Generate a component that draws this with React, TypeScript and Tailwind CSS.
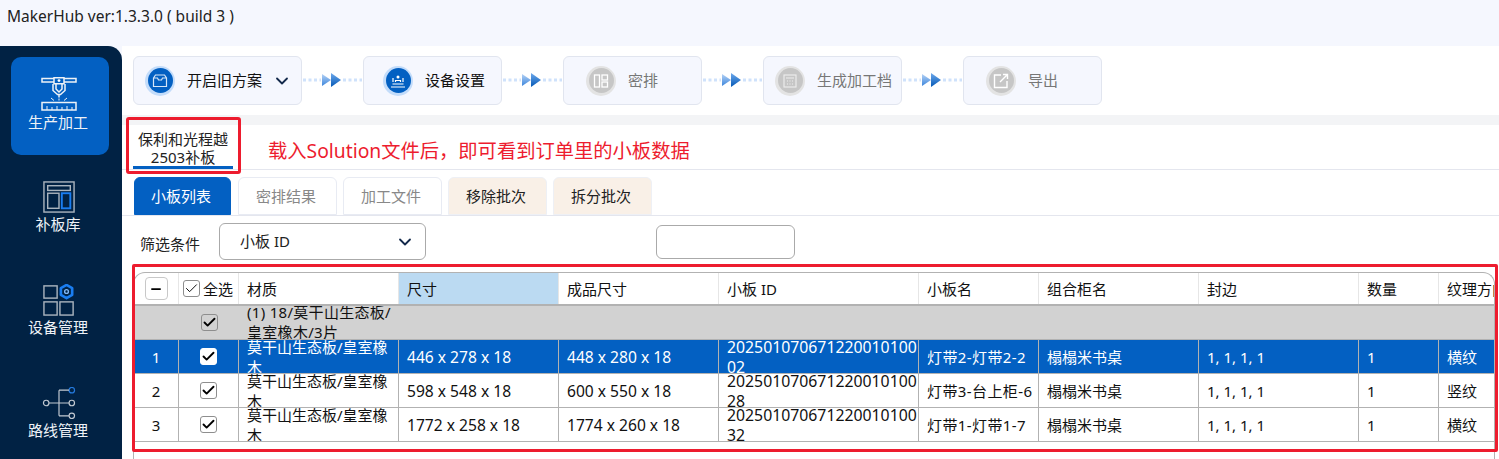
import { Check, ChevronDown, Minus } from 'lucide-react';
import type { ReactNode } from 'react';

const FONT = 'font-["Noto_Sans","Noto_Sans_CJK_SC",sans-serif]';
const COLS = 'grid grid-cols-[45px_60px_160px_160px_160px_200px_120px_160px_160px_80px_55px]';

function MachineIcon() {
    return (
        <svg width="36" height="34" viewBox="0 0 36 34" fill="none" stroke="#eef2f7" strokeWidth="1.500">
            <path d="M1 1.500h12v3.500H1zM23 1.500h12v3.500H23zM13 .8h10v6H13z" />
            <circle cx="18" cy="3.600" r="1.400" fill="#fff" stroke="none" />
            <path d="M12 7v6.500l4.500 4h3l4.500-4V7M15 7v5l3 3 3-3V7M18 17.500v3" />
            <path d="M10 21l3 2.500M26 21l-3 2.500M18 21.500v2" strokeWidth="1" />
            <path d="M1 25.500h34v7.500H1z" />
            <path d="M6 29v4M11 30v3M16 29v4M21 30v3M26 29v4M31 30v3" strokeWidth="1" />
        </svg>
    );
}

function BoardIcon() {
    return (
        <svg width="32" height="32" viewBox="0 0 34 34" fill="none" stroke="#aab4be" strokeWidth="1.500">
            <rect x="1" y="1" width="32" height="32" />
            <rect x="5" y="5" width="24" height="5" />
            <rect x="5" y="13" width="12" height="16" />
            <rect x="20" y="13" width="9" height="16" stroke="#1a7df0" strokeWidth="2" />
        </svg>
    );
}

function DeviceIcon() {
    return (
        <svg width="34" height="32" viewBox="0 0 34 34" fill="none" stroke="#aab4be" strokeWidth="1.500">
            <rect x="1" y="2" width="14" height="13" />
            <rect x="1" y="19" width="14" height="14" />
            <rect x="18" y="19" width="14" height="14" />
            <path d="M25 1l6 3.500v7L25 15l-6-3.500v-7z" stroke="#1a7df0" strokeWidth="2.800" strokeLinejoin="round" />
            <circle cx="25" cy="8" r="2" stroke="#7fb6f5" />
        </svg>
    );
}

function RouteIcon() {
    return (
        <svg width="36" height="32" viewBox="0 0 36 35" fill="none" stroke="#c2c9d1" strokeWidth="1.300">
            <circle cx="4" cy="17.500" r="3" />
            <circle cx="32" cy="17.500" r="3" />
            <circle cx="32" cy="3.500" r="3" stroke="#2479dc" />
            <circle cx="32" cy="31.500" r="3" />
            <path d="M7 17.500h22M18 3.500v28M18 3.500h11M18 31.500h11" />
        </svg>
    );
}

function SideItem({ label, active, children }: { label: string; active?: boolean; children: ReactNode }) {
    return (
        <div className={`flex h-[98px] w-[98px] shrink-0 flex-col items-center justify-end rounded-[10px] pr-[2px] text-[15px] leading-5 text-[#eef2f7] ${active ? 'bg-[#0360c2] pb-[23px]' : 'pb-[24px]'}`}>
            {children}
            <span className="mr-[2px] mt-[1px]">{label}</span>
        </div>
    );
}

function StepGlyph({ kind }: { kind: string }) {
    if (kind === 'box') {
        return (
            <svg width="16" height="16" viewBox="0 0 16 16" fill="none" stroke="#d7e6f7" strokeWidth="1.200">
                <path d="M1.500 5l2-3h9l2 3v8.500h-13zM1.500 5h4l1 2h3l1-2h4" />
            </svg>
        );
    }
    if (kind === 'stage') {
        return (
            <svg width="16" height="16" viewBox="0 0 16 16" fill="none" stroke="#fff" strokeWidth="1.200">
                <path d="M1 14h14M2.500 11h11" />
                <circle cx="8" cy="4" r="1.500" fill="#fff" stroke="none" />
                <path d="M5.500 9V7.500h5V9M3 5v4M13 5v4" />
            </svg>
        );
    }
    if (kind === 'grid') {
        return (
            <svg width="16" height="16" viewBox="0 0 16 16" fill="none" stroke="#fff" strokeWidth="1.300">
                <rect x="1.500" y="2" width="5" height="12" />
                <rect x="9" y="2" width="5.500" height="5" />
                <rect x="9" y="9" width="5.500" height="5" />
            </svg>
        );
    }
    if (kind === 'doc') {
        return (
            <svg width="16" height="16" viewBox="0 0 16 16" fill="none" stroke="#eee" strokeWidth="1.100">
                <rect x="2" y="2" width="12" height="12" />
                <path d="M4 5h8M5 8h1M7.500 8h1M10 8h1M5 11h1M7.500 11h1M10 11h1" />
            </svg>
        );
    }
    return (
        <svg width="18" height="18" viewBox="0 0 18 18" fill="none" stroke="#fff" strokeWidth="1.400">
            <path d="M9 3H2.500v12.500H15V9M8 10l7-7M11 2.500h4.500V7" />
        </svg>
    );
}

function Step({ label, kind, active, padding, chevron }: { label: string; kind: string; active?: boolean; padding: string; chevron?: boolean }) {
    return (
        <div className={`flex h-[49px] items-center rounded-md border border-[#e1e5ef] bg-[#f5f7fe] ${padding} ${chevron ? 'w-[169px]' : 'w-[139px]'}`}>
            <div className={`flex h-[30px] w-[30px] shrink-0 items-center justify-center rounded-full ${active ? 'bg-[#c3dcfa]' : 'bg-[#e3e3e3]'}`}>
                <div className={`flex h-[25px] w-[25px] items-center justify-center rounded-full ${active ? 'bg-[#0360c2]' : 'bg-[#c6c6c6]'}`}>
                    <StepGlyph kind={kind} />
                </div>
            </div>
            <span className={`ml-[12px] whitespace-nowrap text-[15px] ${active ? 'text-[#111]' : 'text-[#777]'}`}>{label}</span>
            {chevron && <ChevronDown className="ml-[10px] h-[20px] w-[20px] text-[#13294b]" strokeWidth={2.2} />}
        </div>
    );
}

function Connector({ id }: { id: string }) {
    return (
        <div className="flex h-[49px] items-center pb-[1px]">
            <svg width="61" height="16" viewBox="0 0 61 16" className="shrink-0">
                <defs>
                    <linearGradient id={`${id}a`} x1="0" y1="0" x2="0" y2="1">
                        <stop offset="0" stopColor="#b5d2f5" />
                        <stop offset="1" stopColor="#3d86dc" />
                    </linearGradient>
                    <linearGradient id={`${id}b`} x1="0" y1="0" x2="0" y2="1">
                        <stop offset="0" stopColor="#6ea9ec" />
                        <stop offset="1" stopColor="#0458b5" />
                    </linearGradient>
                </defs>
                <path d="M1 8H19M41 8H60" stroke="#cfe2fb" strokeWidth="3" strokeDasharray="3 2.500" />
                <path d="M20 2l9 6-9 6z" fill={`url(#${id}a)`} />
                <path d="M29 1l10 7-10 7z" fill={`url(#${id}b)`} />
            </svg>
        </div>
    );
}

function TabButton({ label, tone }: { label: string; tone: 'active' | 'idle' | 'warm' }) {
    const cls = {
        active: 'w-[97px] mr-[1px] bg-[#0360c2] text-white border-[#0360c2]',
        idle: 'w-[99px] bg-white text-[#888] border-[#e8ebf3]',
        warm: 'w-[99px] bg-[#f9f0e7] text-[#222] border-[#eef0f5]',
    }[tone];
    return (
        <div className={`flex h-[38px] items-center justify-center rounded-t-md border pr-[3px] text-[15px] ${cls}`}>{label}</div>
    );
}

function Box({ selected, thin }: { selected?: boolean; thin?: boolean }) {
    return (
        <div className={`flex h-[17px] w-[17px] shrink-0 items-center justify-center rounded-[3px] border ${selected ? 'border-white bg-white' : 'border-[#8e8e8e]'}`}>
            <Check className="h-[15px] w-[15px] text-black" strokeWidth={thin ? 1.5 : 3} />
        </div>
    );
}

const rows = [
    { n: 1, size: '446 x 278 x 18', done: '448 x 280 x 18', id: '20250107067122001010002', name: '灯带2-灯带2-2', grain: '横纹' },
    { n: 2, size: '598 x 548 x 18', done: '600 x 550 x 18', id: '20250107067122001010028', name: '灯带3-台上柜-6', grain: '竖纹' },
    { n: 3, size: '1772 x 258 x 18', done: '1774 x 260 x 18', id: '20250107067122001010032', name: '灯带1-灯带1-7', grain: '横纹' },
];

function Cell({ children, className = '' }: { children?: ReactNode; className?: string }) {
    return <div className={`flex items-center overflow-hidden px-2 ${className}`}>{children}</div>;
}

function ProductTable() {
    const heads = ['尺寸', '成品尺寸', '小板 ID', '小板名', '组合柜名', '封边', '数量', '纹理方向'];
    return (
        <div className="ml-[11px] mr-[4px] mt-[7px] h-[200px] overflow-hidden rounded-t-[12px] border border-b-0 border-[#b2b2b2] text-[15px] leading-5 text-[#111]">
            <div className={`${COLS} h-[33px] border-b-2 border-[#b2b2b2]`}>
                <div className="flex items-center justify-center border-r border-[#e6e6e6]">
                    <div className="flex h-[23px] w-[23px] items-center justify-center rounded border border-[#c8c8c8]">
                        <Minus className="h-[14px] w-[14px] text-black" strokeWidth={3} />
                    </div>
                </div>
                <div className="flex items-center gap-[3px] border-r border-[#e6e6e6] pl-[4px]">
                    <Box thin />
                    <span className="whitespace-nowrap">全选</span>
                </div>
                <Cell className="border-r border-[#e6e6e6]">材质</Cell>
                {heads.map((h, i) => (
                    <Cell key={h} className={`whitespace-nowrap ${i === 0 ? 'bg-[#bbdaf2]' : ''} ${i < 7 ? 'border-r border-[#e6e6e6]' : ''}`}>{h}</Cell>
                ))}
            </div>
            <div className={`${COLS} h-[34px] border-b border-[#b2b2b2] bg-[#d2d2d2]`}>
                <div />
                <div className="flex items-center justify-center"><Box /></div>
                <Cell className="whitespace-pre-line pb-[2px] tracking-[0.3px]">{'(1) 18/莫干山生态板/\n皇室橡木/3片'}</Cell>
            </div>
            {rows.map((r) => {
                const selected = r.n === 1;
                const line = 'border-r border-[#b2b2b2]';
                return (
                    <div key={r.n} className={`${COLS} h-[34px] border-b border-[#b2b2b2] ${selected ? 'bg-[#0360c2] text-white' : ''}`}>
                        <Cell className={`justify-center ${line}`}>{r.n}</Cell>
                        <div className={`flex items-center justify-center ${line}`}><Box selected={selected} /></div>
                        <Cell className={line}>莫干山生态板/皇室橡木</Cell>
                        <Cell className={`whitespace-nowrap text-[15.6px] ${line}`}>{r.size}</Cell>
                        <Cell className={`whitespace-nowrap text-[15.6px] ${line}`}>{r.done}</Cell>
                        <Cell className={`break-all pr-0 text-[15.8px] ${line}`}>{r.id}</Cell>
                        <Cell className={`whitespace-nowrap tracking-[0.4px] ${line}`}>{r.name}</Cell>
                        <Cell className={`whitespace-nowrap ${line}`}>榻榻米书桌</Cell>
                        <Cell className={`whitespace-nowrap ${line}`}>1, 1, 1, 1</Cell>
                        <Cell className={line}>1</Cell>
                        <Cell className="whitespace-nowrap">{r.grain}</Cell>
                    </div>
                );
            })}
        </div>
    );
}

export default function App() {
    return (
        <div className={`relative h-[459px] w-[1499px] overflow-hidden bg-[#f5f7fe] ${FONT}`}>
            <div className="flex h-[46px] items-start pl-[7px] pt-[5px] text-[15.5px] leading-[22px] text-[#222]">MakerHub ver:1.3.3.0 ( build 3 )</div>
            <div className="flex h-[413px]">
                <aside className="flex w-[122px] shrink-0 flex-col items-center gap-[5px] rounded-tr-[14px] bg-[#012244] pr-[2px] pt-[11px]">
                    <SideItem label="生产加工" active><MachineIcon /></SideItem>
                    <SideItem label="补板库"><BoardIcon /></SideItem>
                    <SideItem label="设备管理"><DeviceIcon /></SideItem>
                    <SideItem label="路线管理"><RouteIcon /></SideItem>
                </aside>
                <main className="min-w-0 flex-1 bg-white">
                    <div className="flex h-[69px] items-start rounded-tl-[12px] pl-[11px] pt-[10px]">
                        <Step label="开启旧方案" kind="box" active chevron padding="pl-[11px]" />
                        <Connector id="c1" />
                        <Step label="设备设置" kind="stage" active padding="pl-[19px]" />
                        <Connector id="c2" />
                        <Step label="密排" kind="grid" padding="pl-[22px]" />
                        <Connector id="c3" />
                        <Step label="生成加工档" kind="doc" padding="pl-[11px]" />
                        <Connector id="c4" />
                        <Step label="导出" kind="export" padding="pl-[22px]" />
                    </div>
                    <div className="h-[10px] bg-[#f3f4f6]" />
                    <div className="flex h-[45px] items-stretch border-b border-[#e4e6ee] pl-[11px]">
                        <div className="flex w-[100px] flex-col items-center border-b-[3px] border-[#0360c2] pt-[5px] text-[15px] leading-[18px] text-[#222]">
                            <span>保利和光程越</span>
                            <span>2503补板</span>
                        </div>
                        <div className="ml-[35px] flex items-center pt-[9px] text-[19.3px] text-[#ed1c2e]">载入Solution文件后，即可看到订单里的小板数据</div>
                    </div>
                    <div className="flex h-[46px] items-end gap-[6px] border-b border-[#e4e6ee] pl-[12px]">
                        <TabButton label="小板列表" tone="active" />
                        <TabButton label="密排结果" tone="idle" />
                        <TabButton label="加工文件" tone="idle" />
                        <TabButton label="移除批次" tone="warm" />
                        <TabButton label="拆分批次" tone="warm" />
                    </div>
                    <div className="flex h-[49px] items-center pl-[18px] pt-[2px] text-[15px] text-[#222]">
                        <span className="w-[79px] pt-[5px]">筛选条件</span>
                        <div className="flex h-[37px] w-[207px] items-center justify-between rounded-md border border-[#aaa] pl-[20px] pr-[10px]">
                            <span>小板 ID</span>
                            <ChevronDown className="h-[20px] w-[20px] text-[#13294b]" strokeWidth={2.2} />
                        </div>
                        <div className="ml-[230px] h-[34px] w-[139px] rounded-md border border-[#aaa]" />
                    </div>
                    <ProductTable />
                </main>
            </div>
            <div className="absolute left-[126px] top-[117px] h-[57px] w-[115px] rounded-[3px] border-[3px] border-[#ed1c2e]" />
            <div className="absolute left-[132px] top-[264px] h-[188px] w-[1366px] rounded-[2px] border-[3px] border-[#ed1c2e]" />
        </div>
    );
}
